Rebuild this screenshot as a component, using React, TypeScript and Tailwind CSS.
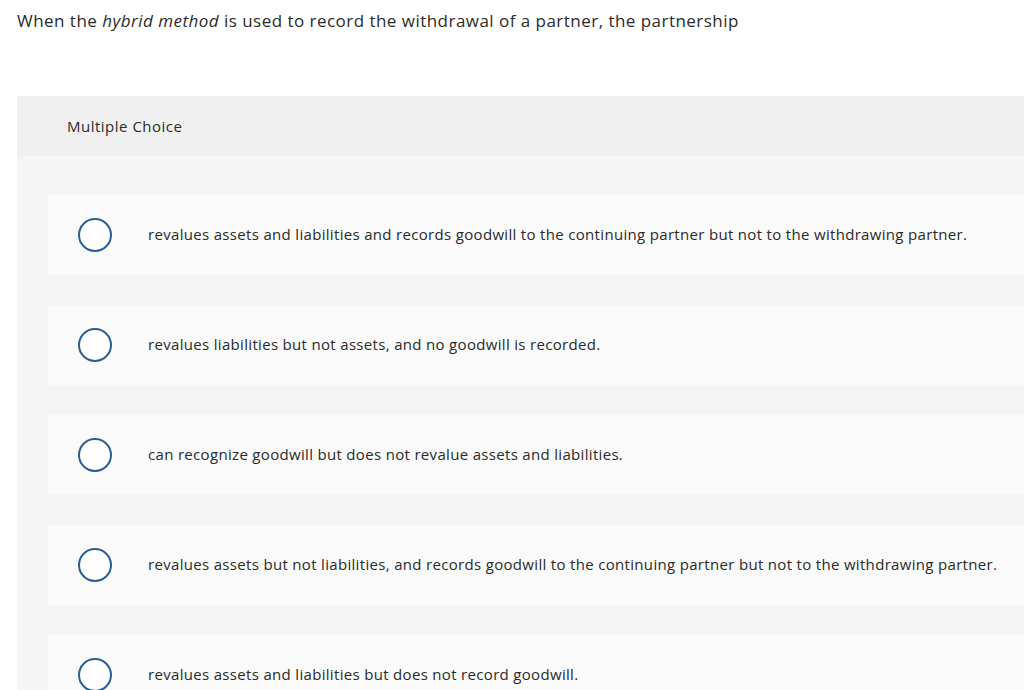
const options = [
  "revalues assets and liabilities and records goodwill to the continuing partner but not to the withdrawing partner.",
  "revalues liabilities but not assets, and no goodwill is recorded.",
  "can recognize goodwill but does not revalue assets and liabilities.",
  "revalues assets but not liabilities, and records goodwill to the continuing partner but not to the withdrawing partner.",
  "revalues assets and liabilities but does not record goodwill.",
];

export default function App() {
  return (
    <div
      className="w-[1024px] h-[690px] overflow-hidden bg-white text-[#2b2b2b]"
      style={{ fontFamily: "'Open Sans', Lato, sans-serif" }}
    >
      <p className="pl-[17px] pt-[10px] text-[17px] leading-[22px] tracking-[0.47px]">
        When the <i>hybrid method</i> is used to record the withdrawal of a partner, the partnership
      </p>

      <div className="ml-[17px] mt-[64px] bg-[#f5f5f5]">
        <div className="h-[60px] bg-[#f0f0f0] pl-[50px] flex items-center text-[15px] tracking-[0.5px]">
          Multiple Choice
        </div>
        <div className="pl-[31px] pt-[39px] flex flex-col gap-[30px]">
          {options.map((o) => (
            <div key={o} className="h-[80px] bg-[#fafafa] flex items-center">
              <span className="ml-[30px] w-[34px] h-[34px] rounded-full border-2 border-[#2a5d94] bg-white shrink-0" />
              <span className="ml-[36px] -mt-[2px] text-[15px] tracking-[0.32px] whitespace-nowrap">{o}</span>
            </div>
          ))}
        </div>
      </div>
    </div>
  );
}
